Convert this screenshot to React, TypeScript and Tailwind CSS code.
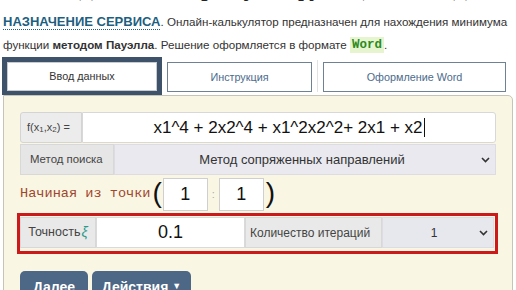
import React from "react";

function Chevron() {
  return (
    <svg width="9" height="6" viewBox="0 0 9 6" className="shrink-0">
      <path d="M1 1 L4.5 4.5 L8 1" fill="none" stroke="#333" strokeWidth="1.6" />
    </svg>
  );
}

export default function App() {
  return (
    <div className="w-[516px] h-[290px] overflow-hidden bg-white font-['Liberation_Sans',Arial,sans-serif] text-[#333]">
      <div className="h-[10px] overflow-hidden">
        <div className="-mt-[29px] pl-[4px] text-[27px] leading-[30px] font-['Liberation_Serif',serif] text-[#222] whitespace-nowrap">
          Нахождение экстремума функции методом Пауэлла
        </div>
      </div>
      <div className="pl-[3px] text-[11.6px] whitespace-nowrap">
        <div className="h-[23px] flex items-center">
          <span className="font-bold text-[13px] text-[#1d5f80] border-b border-dotted border-[#1d5f80] leading-[15px]">НАЗНАЧЕНИЕ СЕРВИСА</span>
          <span>. Онлайн-калькулятор предназначен для нахождения минимума</span>
        </div>
        <div className="h-[23px] flex items-center">
          <span>функции&nbsp;</span>
          <b>методом Пауэлла</b>
          <span>. Решение оформляется в формате&nbsp;</span>
          <span className="font-['Liberation_Mono',monospace] font-bold text-[12.5px] leading-[16px] text-[#2c8a1f] bg-[#e6f5cf] px-[2px]">Word</span>
          <span>.</span>
        </div>
      </div>
      <div className="flex items-start mt-[1px] pl-[2px] h-[38px]">
        <div className="w-[160px] h-[38px] bg-[#3e526a] p-[5px] pb-[4px]">
          <div className="h-full bg-white border border-[#c8ccd0] flex items-center justify-center text-[10.8px] text-[#333]">
            Ввод данных
          </div>
        </div>
        <div className="ml-[5px] mt-[5px] w-[145px] h-[30px] bg-white border border-[#6f8294] flex items-center justify-center text-[10.8px] text-[#4b6b8c]">
          Инструкция
        </div>
        <div className="ml-[5px] mt-[3px] w-px h-[32px] bg-[#e2e2e2]" />
        <div className="ml-[5px] mt-[5px] w-[183px] h-[30px] bg-white border border-[#6f8294] flex items-center justify-center text-[10.8px] text-[#4b6b8c]">
          Оформление Word
        </div>
      </div>
      <div className="ml-[3px] w-[510px] h-[200px] bg-[#f9f7e4] border border-[#c4c4b8] rounded-tr-[5px] pl-[16px] pr-[16px] pt-[16px]">
        <div className="flex h-[31px]">
          <div className="w-[62px] bg-[#ececec] border border-[#d4d4d4] rounded-l-[3px] flex items-center pl-[6px] text-[11px] text-[#444] whitespace-nowrap">
            f(x<sub className="text-[8px]">1</sub>,x<sub className="text-[8px]">2</sub>) =
          </div>
          <div className="flex-1 bg-white border border-[#d8d8d8] rounded-r-[3px] flex items-center justify-center text-[17px] text-[#111] whitespace-nowrap">
            x1^4 + 2x2^4 + x1^2x2^2+ 2x1 + x2<span className="inline-block w-px h-[19px] bg-[#111] ml-[1px]" />
          </div>
        </div>
        <div className="flex h-[31px] mt-[1px]">
          <div className="w-[94px] bg-[#e6e6e6] border border-[#d8d8d8] flex items-center pl-[9px] text-[11.4px] text-[#444] whitespace-nowrap">
            Метод поиска
          </div>
          <div className="flex-1 bg-[#e9e9ef] border border-[#dcdce2] flex items-center pl-[8px] pr-[5px] text-[13px] text-[#333]">
            <span className="flex-1 text-center">Метод сопряженных направлений</span>
            <Chevron />
          </div>
        </div>
        <div className="flex items-center h-[36px] mt-[1px]">
          <span className="font-['Liberation_Mono',monospace] text-[13.6px] text-[#a1452b] whitespace-nowrap">Начиная из точки</span>
          <span className="ml-[2px] text-[28px] leading-none text-[#111] -mt-[2px]">(</span>
          <div className="ml-[1px] w-[45px] h-[33px] bg-white border border-[#cfcfcf] flex items-center justify-center text-[18px] text-[#111]">1</div>
          <span className="w-[11px] text-center text-[11px] text-[#aaa]">:</span>
          <div className="w-[45px] h-[33px] bg-white border border-[#cfcfcf] flex items-center justify-center text-[18px] text-[#111]">1</div>
          <span className="ml-[2px] text-[28px] leading-none text-[#111] -mt-[2px]">)</span>
        </div>
        <div className="-ml-[3px] -mr-[2px] mt-[1px] border-[3px] border-[#cc1a1a] pt-[1px] pb-[3px] pr-[1px]">
          <div className="flex h-[31px]">
            <div className="w-[76px] bg-[#e9e9e9] border border-[#d8d8d8] flex items-center justify-center text-[12.5px] text-[#444] whitespace-nowrap">
              Точность<span className="italic text-[#2a9a8a] text-[14px] ml-[1px]">ξ</span>
            </div>
            <div className="w-[149px] bg-white border border-[#dadada] flex items-center justify-center text-[18px] text-[#111]">
              0.1
            </div>
            <div className="w-[137px] bg-[#e9e9e9] border border-[#d8d8d8] flex items-center pl-[4px] text-[12px] text-[#444] whitespace-nowrap">
              Количество итераций
            </div>
            <div className="flex-1 bg-[#e7e7ee] border border-[#dcdce2] flex items-center pl-[6px] pr-[5px] text-[12px] text-[#333]">
              <span className="flex-1 text-center">1</span>
              <Chevron />
            </div>
          </div>
        </div>
        <div className="flex gap-[4px] mt-[17px]">
          <div className="w-[68px] h-[32px] bg-[#4d6786] rounded-t-[5px] flex items-center justify-center text-white font-bold text-[14px]">
            Далее
          </div>
          <div className="w-[99px] h-[32px] bg-[#4d6786] rounded-t-[5px] flex items-center justify-center text-white font-bold text-[14px] gap-[4px]">
            Действия <span className="text-[9px]">▼</span>
          </div>
        </div>
      </div>
    </div>
  );
}
